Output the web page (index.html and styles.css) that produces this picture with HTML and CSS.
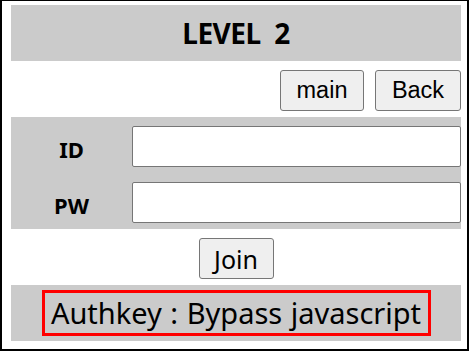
FILE: index.html
```html
<!DOCTYPE html>
<html>
<head>
<meta charset="utf-8">
<link rel="stylesheet" href="styles.css">
</head>
<body>
<div class="frame">
  <div class="header">LEVEL&nbsp; 2</div>
  <div class="nav">
    <button class="btn btn-arial">main</button>
    <button class="btn btn-arial btn-back">Back</button>
  </div>
  <div class="form">
    <div class="label">ID</div>
    <input class="field" type="text">
    <div class="label label-pw">PW</div>
    <input class="field" type="password">
  </div>
  <div class="join-row">
    <button class="btn btn-join">Join</button>
  </div>
  <div class="footer">
    <span class="authkey">Authkey : Bypass javascript</span>
  </div>
</div>
</body>
</html>
```
FILE: styles.css
```css
html, body {
  margin: 0;
  padding: 0;
  background: #fff;
}
.frame {
  box-sizing: border-box;
  width: 469px;
  height: 351px;
  border: 2px solid #000;
  border-top-width: 1px;
  padding: 4px 6px 0 9px;
  display: flex;
  flex-direction: column;
}
.header {
  height: 56px;
  background: #cbcbcb;
  display: flex;
  align-items: center;
  justify-content: center;
  font-family: "Noto Sans", sans-serif;
  font-weight: bold;
  font-size: 28px;
  letter-spacing: -0.5px;
  color: #000;
}
.nav {
  margin-top: 9px;
  display: flex;
  justify-content: flex-end;
  gap: 11px;
}
.btn {
  box-sizing: border-box;
  height: 41px;
  background: #efefef;
  border: 1px solid #767676;
  border-radius: 3px;
  color: #000;
  padding: 0;
  margin: 0;
}
.btn-arial {
  font-family: "Liberation Sans", Arial, sans-serif;
  font-size: 23.5px;
  width: 84px;
}
.btn-back {
  width: 86px;
}
.form {
  margin-top: 6px;
  height: 112px;
  background: #cbcbcb;
  display: grid;
  grid-template-columns: 121px 1fr;
  grid-template-rows: 41px 41px;
  row-gap: 15px;
  padding-top: 9px;
  box-sizing: border-box;
  align-items: center;
}
.label {
  font-family: "Noto Sans", sans-serif;
  font-weight: bold;
  font-size: 22px;
  text-align: center;
  color: #000;
  padding-top: 5px;
}
.field {
  box-sizing: border-box;
  height: 41px;
  width: 100%;
  margin: 0;
  border: 1px solid #767676;
  border-radius: 2px;
  background: #fff;
}
.join-row {
  margin-top: 9px;
  display: flex;
  justify-content: center;
}
.btn-join {
  width: 75px;
  font-family: "Noto Sans", sans-serif;
  font-size: 25px;
}
.footer {
  margin-top: 6px;
  height: 56px;
  background: #cbcbcb;
  display: flex;
  align-items: center;
  justify-content: center;
}
.authkey {
  box-sizing: border-box;
  width: 389px;
  height: 46px;
  border: 3px solid #f00;
  font-family: "Noto Sans", sans-serif;
  font-size: 29px;
  word-spacing: 1px;
  color: #000;
  display: flex;
  align-items: center;
  justify-content: center;
  padding-bottom: 1px;
}
```
